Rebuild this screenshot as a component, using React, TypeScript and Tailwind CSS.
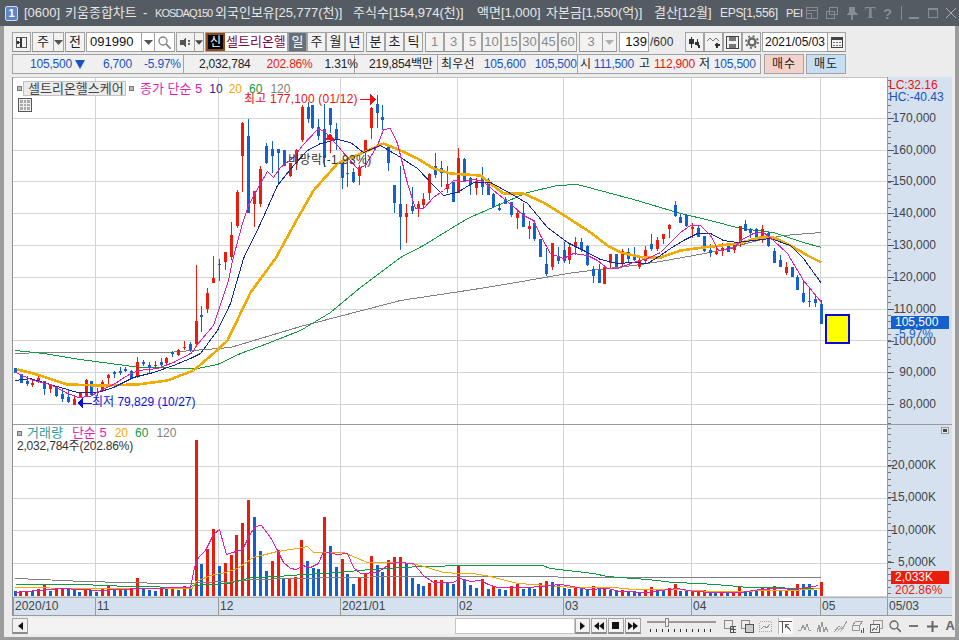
import React from 'react';

const RED = '#ea1c0c';
const BLUE = '#1460ce';
const GRID = '#d4d4d4';

// x, high, body top, body bottom, low, colour
type Candle = [number, number, number, number, number, 'r' | 'b'];
const CANDLES: Candle[] = [
  [15,368,368,373,373,'b'],[21,374,374,383,383,'b'],[27,376,381,384,386,'b'],[32,379,383,385,387,'r'],
  [38,374,378,382,383,'r'],[44,381,381,389,395,'b'],[50,384,384,389,393,'r'],[56,386,386,396,397,'b'],
  [62,389,394,399,402,'b'],[68,390,397,402,403,'b'],[74,395,399,405,405,'r'],[80,392,392,398,398,'r'],
  [86,379,380,397,397,'r'],[91,381,381,395,396,'b'],[97,388,392,393,396,'b'],[102,380,382,391,392,'r'],
  [108,374,375,378,384,'r'],[114,371,372,374,378,'b'],[120,367,371,373,375,'b'],[125,367,369,371,372,'b'],
  [131,370,371,378,378,'b'],[137,357,362,377,378,'r'],[143,360,362,364,366,'b'],[149,362,365,368,373,'b'],
  [155,361,365,366,368,'r'],[161,358,362,365,366,'b'],[166,357,358,363,365,'r'],[172,351,352,354,357,'b'],
  [178,349,350,355,356,'r'],[184,341,347,347,350,'r'],[190,342,344,350,352,'b'],[196,265,321,344,347,'r'],
  [201,306,315,317,332,'b'],[207,288,293,309,313,'r'],[213,256,278,283,283,'r'],[219,259,264,265,281,'b'],
  [225,252,252,262,270,'r'],[231,222,235,257,260,'r'],[237,190,192,226,228,'r'],[242,122,123,156,192,'r'],
  [248,119,136,213,213,'b'],[254,192,191,204,227,'r'],[260,166,169,204,207,'r'],[266,143,146,163,164,'b'],
  [272,141,149,156,173,'b'],[278,149,149,153,185,'b'],[284,150,150,166,166,'b'],[290,163,163,176,177,'r'],
  [296,149,150,163,170,'r'],[302,105,107,140,142,'r'],[308,102,107,119,123,'b'],[312,105,105,128,129,'b'],
  [318,119,127,136,140,'b'],[324,104,129,158,167,'b'],[330,108,108,125,133,'b'],[336,123,129,140,150,'b'],
  [342,160,160,178,189,'b'],[347,162,173,174,187,'b'],[353,168,172,182,183,'b'],[359,165,167,176,185,'r'],
  [365,140,140,153,168,'r'],[371,107,108,128,139,'r'],[377,95,104,113,128,'b'],[382,105,117,120,130,'b'],
  [388,147,147,163,171,'b'],[394,185,185,203,213,'b'],[400,166,204,217,250,'b'],[406,204,213,217,243,'r'],
  [412,187,206,211,214,'b'],[418,201,204,208,217,'r'],[423,193,199,205,208,'r'],[429,173,174,193,200,'r'],
  [435,153,166,175,178,'b'],[441,161,168,173,187,'b'],[447,166,184,189,193,'r'],[453,182,182,202,202,'b'],
  [458,148,158,193,193,'r'],[464,158,159,181,182,'b'],[470,177,178,185,195,'b'],[476,178,181,188,195,'r'],
  [482,167,178,187,195,'b'],[488,178,180,195,195,'b'],[493,193,194,207,208,'b'],[499,203,208,210,211,'b'],
  [505,197,199,204,204,'b'],[511,202,202,215,217,'b'],[517,209,213,218,229,'r'],[523,203,213,227,227,'b'],
  [529,221,226,229,239,'r'],[534,220,223,239,241,'b'],[540,239,239,257,257,'b'],[546,248,264,274,276,'b'],
  [552,243,243,267,270,'r'],[558,247,256,261,264,'b'],[564,242,250,261,263,'b'],[569,243,247,260,264,'r'],
  [575,237,242,246,255,'r'],[581,238,242,249,252,'b'],[587,245,246,265,266,'b'],[593,266,269,276,283,'b'],
  [599,264,270,283,283,'b'],[604,266,267,284,284,'r'],[610,254,254,263,268,'r'],[616,254,254,267,267,'b'],
  [622,249,251,263,267,'r'],[628,248,252,259,263,'b'],[634,247,255,260,261,'b'],[639,257,260,267,269,'r'],
  [645,246,250,261,263,'r'],[651,234,244,249,251,'b'],[657,237,240,249,251,'r'],[663,234,234,239,244,'r'],
  [669,224,225,229,238,'r'],[675,201,205,216,217,'b'],[680,214,217,223,223,'b'],[686,214,215,226,227,'b'],
  [692,223,227,229,238,'r'],[698,225,228,237,237,'b'],[704,236,236,251,252,'b'],[710,244,250,253,257,'b'],
  [716,245,252,254,255,'r'],[722,243,248,251,256,'r'],[728,244,245,252,252,'b'],[734,245,245,250,253,'r'],
  [740,226,226,243,247,'r'],[745,220,224,231,231,'b'],[750,228,229,233,238,'b'],[756,228,229,238,239,'b'],
  [762,225,229,238,243,'r'],[768,232,233,246,247,'b'],[774,248,251,263,263,'b'],[780,255,260,267,267,'b'],
  [786,262,267,273,275,'r'],[792,267,267,277,277,'b'],[797,275,277,290,290,'b'],[803,281,293,302,303,'b'],
  [809,289,301,302,307,'b'],[815,296,299,303,307,'b'],[821,300,304,324,324,'b'],
];

const VOLUME: [number, number, 'r' | 'b'][] = [
  [15,591,'b'],[20,591,'r'],[26,591,'r'],[32,591,'b'],[38,589,'r'],[44,585,'r'],[50,591,'b'],[56,589,'r'],
  [62,588,'r'],[68,589,'b'],[74,589,'b'],[79,592,'b'],[85,588,'r'],[90,590,'b'],[96,592,'b'],[102,588,'r'],
  [108,586,'r'],[114,590,'b'],[120,588,'r'],[125,590,'b'],[131,589,'r'],[137,578,'r'],[143,589,'b'],[149,590,'b'],
  [155,591,'b'],[161,588,'r'],[166,589,'b'],[172,589,'r'],[178,590,'b'],[184,586,'r'],[190,589,'b'],
  [196,440,'r'],[201,564,'b'],[207,549,'r'],[213,529,'r'],[219,566,'b'],[225,563,'r'],[231,555,'r'],[236,535,'r'],
  [242,523,'r'],[248,500,'r'],[254,517,'b'],[260,551,'b'],[266,571,'b'],[272,561,'r'],[278,550,'r'],[283,579,'b'],
  [289,578,'r'],[295,577,'r'],[301,540,'r'],[307,561,'b'],[313,568,'b'],[318,569,'b'],[324,517,'r'],[330,546,'b'],
  [336,567,'b'],[342,559,'r'],[347,574,'b'],[353,584,'b'],[359,578,'r'],[365,574,'r'],[371,556,'r'],[377,565,'b'],
  [382,572,'b'],[388,560,'r'],[394,557,'r'],[400,557,'r'],[406,563,'b'],[412,578,'b'],[418,584,'b'],[423,586,'b'],
  [429,583,'r'],[435,580,'r'],[441,580,'r'],[447,583,'b'],[453,584,'b'],[458,566,'r'],[464,579,'b'],[470,585,'b'],
  [476,588,'b'],[482,579,'r'],[488,589,'b'],[493,586,'r'],[499,589,'b'],[505,590,'b'],[511,586,'r'],[517,584,'r'],
  [523,589,'b'],[529,587,'b'],[534,589,'b'],[540,583,'r'],[546,581,'r'],[552,582,'b'],[558,585,'b'],[564,588,'b'],
  [569,589,'b'],[575,588,'r'],[581,588,'b'],[587,589,'b'],[593,586,'r'],[599,589,'b'],[604,588,'r'],[610,590,'b'],
  [616,591,'b'],[622,590,'r'],[628,591,'b'],[634,591,'b'],[639,592,'b'],[645,589,'r'],[651,587,'r'],[657,590,'b'],
  [663,590,'b'],[669,588,'r'],[675,584,'r'],[680,591,'b'],[686,591,'b'],[692,591,'r'],[698,590,'r'],[704,590,'r'],
  [710,592,'b'],[715,592,'b'],[721,592,'r'],[727,592,'b'],[733,592,'r'],[739,587,'r'],[745,591,'b'],[750,591,'b'],
  [756,591,'b'],[762,588,'r'],[768,588,'r'],[774,586,'r'],[780,591,'b'],[786,591,'r'],[792,589,'r'],[797,584,'r'],
  [803,584,'b'],[809,584,'b'],[815,590,'b'],[821,582,'r'],
];

const MA5 = '15,372 33,380 50,384 67,393 78,397 90,396 100,390 113,384 127,375 138,370 157,368 173,362 192,352 196,345 213,325 228,280 232,260 242,223 248,205 260,183 267,171 273,177 280,167 293,157 302,145 317,129 323,130 337,145 347,157 357,168 365,165 377,145 383,129 390,128 397,143 407,183 415,208 423,208 433,197 443,190 453,180 463,181 473,179 483,181 493,190 503,198 512,205 523,215 533,220 540,235 550,253 563,258 573,253 587,255 597,260 607,268 617,268 633,262 647,258 660,252 670,242 680,232 690,225 700,225 710,235 718,250 733,248 740,240 753,233 763,232 773,240 787,253 803,280 821,302';
const MA10 = '15,380 30,378 43,382 60,387 77,392 97,392 113,387 133,377 153,372 173,365 190,358 200,353 217,330 230,303 243,258 260,223 277,185 293,165 307,150 320,143 337,139 350,142 363,152 380,145 397,155 417,168 433,185 443,195 457,192 473,182 490,182 510,193 527,203 547,227 567,242 583,250 600,259 617,263 633,262 647,263 660,255 670,248 683,240 697,233 710,233 723,240 737,242 753,240 770,238 790,245 803,258 821,283';
const MA20 = '17,369 33,373 67,384 100,385 137,384 167,380 193,370 213,353 227,340 250,292 275,258 297,218 313,190 337,163 363,152 383,143 400,150 417,158 433,168 450,173 480,175 490,183 503,193 523,193 543,202 567,217 590,232 607,245 620,252 643,257 660,257 680,250 703,247 737,243 760,237 773,237 790,245 807,255 821,262';
const MA60 = '15,350 43,353 80,359 110,363 140,367 197,368 217,364 240,353 267,343 300,330 330,312 360,287 400,257 423,245 467,218 490,208 527,192 557,185 577,184 607,192 633,199 660,207 680,213 710,220 740,228 773,232 803,242 821,247';
const MA120 = '15,353 43,352 167,352 230,347 260,338 300,326 350,313 400,300 473,289 510,283 567,273 607,268 633,265 660,261 693,255 720,250 757,240 783,235 821,232';

const VMA5 = '15,592 60,588 100,590 140,588 190,587 194,567 198,557 205,550 213,534 219,529 226,554 242,549 250,533 255,526 261,525 270,537 277,550 283,562 290,568 296,569 302,565 310,567 318,563 323,551 337,554 347,553 353,567 360,573 377,572 390,563 397,562 413,563 423,575 433,582 453,582 460,578 470,581 480,580 488,584 497,587 510,587 527,587 540,586 560,584 567,585 587,589 607,588 620,591 647,592 660,590 677,588 693,591 713,592 740,592 760,589 780,588 793,589 807,587 818,585';
const VMA20 = '15,587 83,588 192,588 195,581 198,580 210,575 225,572 237,568 253,557 277,551 297,548 307,546 313,552 320,552 343,552 367,562 403,562 420,565 443,572 460,573 473,573 490,576 517,583 533,584 573,587 613,587 633,589 673,589 713,591 793,590 820,588';
const VMA60 = '15,584 80,584 128,586 190,587 192,585 227,583 252,577 277,576 303,574 337,572 370,569 403,567 420,566 470,565 542,565 550,568 567,570 593,573 607,576 620,577 647,579 673,582 700,583 727,585 747,587 820,588';
const VMA120 = '15,578 40,579 83,581 167,583 190,583 220,581 227,582 250,579 297,578 337,577 403,576 470,576 642,577 820,577';

const PRICE_GRID = [118, 150, 181, 213, 245, 277, 309, 340, 372, 404];
const VOLUME_GRID = [466, 498, 530, 563];
const MONTH_LINES = [95, 218, 340, 457, 563, 691, 820];
const PRICE_LABELS: [number, string][] = [[117,'170,000'],[149,'160,000'],[180,'150,000'],[212,'140,000'],[244,'130,000'],[276,'120,000'],[308,'110,000'],[340,'100,000'],[371,'90,000'],[403,'80,000']];
const VOLUME_LABELS: [number, string][] = [[464,'20,000K'],[496,'15,000K'],[529,'10,000K'],[561,'5,000K']];
const DATE_CELLS: [string, string][] = [
  ['2020/10','w-[82px]'],['11','w-[123px]'],['12','w-[122px]'],['2021/01','w-[117px]'],['02','w-[106px]'],
  ['03','w-[128px]'],['04','w-[129px]'],['05','w-[67px]'],['05/03','w-[65px]'],
];
const MINUTES = ['1', '3', '5', '10', '15', '30', '45', '60'];

const Btn = ({ children, className = '' }: { children?: React.ReactNode; className?: string }) => (
  <div className={`h-[20px] flex items-center justify-center bg-[#f2f2f2] border border-[#a3a3a3] border-b-[#8b8b8b] text-[13px] text-[#222] shrink-0 ${className}`}>
    {children}
  </div>
);

const Caret = ({ color = '#555' }: { color?: string }) => (
  <svg width="9" height="5" viewBox="0 0 9 5"><path d="M0 0h9L4.5 5z" fill={color} /></svg>
);

const Ico = ({ w = 13, h = 13, children }: { w?: number; h?: number; children: React.ReactNode }) => (
  <svg width={w} height={h} viewBox={`0 0 ${w} ${h}`} fill="none" shapeRendering="crispEdges" className="shrink-0">{children}</svg>
);

function PricePane() {
  return (
    <svg viewBox="13 77 874 347" width="874" height="347" shapeRendering="crispEdges" className="block text-[12px]">
      <rect x="13" y="77" width="874" height="1" fill="#c4c4c4" />
      {PRICE_GRID.map(y => <rect key={y} x="13" y={y} width="874" height="1" fill={GRID} />)}
      {MONTH_LINES.map(x => <rect key={x} x={x} y="78" width="1" height="346" fill={GRID} />)}
      <g transform="translate(0.5 0.5)" fill="none">
        <polyline points={MA120} stroke="#808080" strokeWidth="1" />
        <polyline points={MA60} stroke="#0f9b3f" strokeWidth="1" />
      </g>
      {CANDLES.map(([x, hi, top, bot, lo, c], i) => (
        <g key={i} fill={c === 'r' ? RED : BLUE}>
          <rect x={x} y={hi} width="1" height={lo - hi} />
          <rect x={x - 1} y={top} width="3" height={Math.max(bot - top, 1)} />
        </g>
      ))}
      <g transform="translate(0.5 0.5)" fill="none">
        <polyline points={MA20} stroke="#f0aa00" strokeWidth="2.6" />
        <polyline points={MA10} stroke="#14289e" strokeWidth="1" />
        <polyline points={MA5} stroke="#e01fb2" strokeWidth="1" />
      </g>
      <path d="M325 140h10l-5-7z" fill="#f01020" />
      <rect x="330" y="140" width="1" height="13" fill="#f01020" />
      <text x="288" y="164" fill="#333" letterSpacing="0.4">비망락(-1.93%)</text>
      <text x="244" y="103" fill="#f01010" letterSpacing="0.2">최고 177,100 (01/12)</text>
      <rect x="360" y="99" width="10" height="1" fill="#f01010" />
      <path d="M370 94l6 5.5-6 5.5z" fill="#f01010" />
      <path d="M83 397l-6 6 6 6z" fill="#0b10e0" />
      <rect x="83" y="403" width="9" height="1" fill="#0b10e0" />
      <text x="92" y="406" fill="#0b10e0">최저 79,829 (10/27)</text>
      <rect x="826" y="315" width="23" height="28" fill="#ffff00" stroke="#0a0ad8" strokeWidth="2" />
    </svg>
  );
}

function VolumePane() {
  return (
    <svg viewBox="13 425 874 172" width="874" height="172" shapeRendering="crispEdges" className="block">
      {VOLUME_GRID.map(y => <rect key={y} x="13" y={y} width="874" height="1" fill={GRID} />)}
      <rect x="13" y="596" width="874" height="1" fill={GRID} />
      {MONTH_LINES.map(x => <rect key={x} x={x} y="425" width="1" height="172" fill={GRID} />)}
      {VOLUME.map(([x, top, c]) => <rect key={x} x={x - 1} y={top} width="3" height={596 - top} fill={c === 'r' ? RED : BLUE} />)}
      <g transform="translate(0.5 0.5)" fill="none" strokeWidth="1">
        <polyline points={VMA120} stroke="#808080" />
        <polyline points={VMA60} stroke="#0f9b3f" />
        <polyline points={VMA20} stroke="#f0aa00" />
        <polyline points={VMA5} stroke="#e01fb2" />
      </g>
    </svg>
  );
}

function AxisTicks({ from, to, labels }: { from: number; to: number; labels: [number, string][] }) {
  const ticks: number[] = [];
  for (let y = from + 3; y < to; y += 6.35) ticks.push(Math.round(y));
  return (
    <svg viewBox={`887 ${from} 65 ${to - from}`} width="65" height={to - from} shapeRendering="crispEdges" className="block text-[12px]">
      {ticks.map(y => <rect key={y} x="887" y={y} width="3" height="1" fill="#777" />)}
      {labels.map(([y, t]) => (
        <g key={t}>
          <rect x="887" y={y + 1} width="6" height="1" fill="#555" />
          <text x="935" y={y + 5} textAnchor="end" fill="#444">{t}</text>
        </g>
      ))}
    </svg>
  );
}

export default function App() {
  return (
    <div className="w-[959px] h-[640px] overflow-hidden flex flex-col bg-[#ececec] text-[13px] [font-family:'Liberation_Sans','Noto_Sans_CJK_KR',sans-serif]">
      {/* title bar */}
      <div className="h-[26px] shrink-0 bg-[#555b63] flex items-center text-[#e6e6e6] pl-[5px] whitespace-nowrap">
        <div className="w-[13px] h-[15px] rounded-[2px] bg-[#5d86c6] border border-[#cfdcf0] text-white text-[11px] font-bold flex items-center justify-center shrink-0">1</div>
        <span className="ml-[6px] w-[34px] shrink-0">[0600]</span>
        <span className="ml-[7px] w-[72px] shrink-0">키움종합차트</span>
        <span className="ml-[6px] w-[7px] shrink-0">-</span>
        <span className="ml-[5px] w-[55px] shrink-0 text-[11px] tracking-[-0.9px]">KOSDAQ150</span>
        <span className="ml-[5px] w-[128px] shrink-0">외국인보유[25,777(천)]</span>
        <span className="ml-[10px] w-[112px] shrink-0">주식수[154,974(천)]</span>
        <span className="ml-[12px] w-[60px] shrink-0">액면[1,000]</span>
        <span className="ml-[9px] w-[99px] shrink-0">자본금[1,550(억)]</span>
        <span className="ml-[9px] w-[57px] shrink-0">결산[12월]</span>
        <span className="ml-[9px] w-[57px] shrink-0 text-[12px] tracking-[-0.3px]">EPS[1,556]</span>
        <span className="ml-[9px] w-[13px] shrink-0 text-[11px] tracking-[-0.3px]">PEI</span>
        <div className="flex items-center ml-[7px] text-[#868c94]">
          <Ico w={12} h={12}><path d="M.5.5h11v11H.5zM.5 3.5h11M.5 6.5h5v5" stroke="currentColor" /></Ico>
          <Ico w={8} h={12}><g /></Ico>
          <Ico w={12} h={12}><path d="M3.5.5h8v7h-8zM.5 4.5h8v7h-8z" stroke="currentColor" /></Ico>
          <Ico w={8} h={12}><g /></Ico>
          <Ico w={12} h={13}><path d="M3 0h6v5l3 3H7v5H5V8H0l3-3z" fill="currentColor" /></Ico>
          <span className="ml-[7px] w-[11px] text-[16px] font-bold leading-none [font-family:'Liberation_Serif',serif]">T</span>
          <span className="ml-[7px] w-[8px] text-[15px] font-bold leading-none">?</span>
          <div className="ml-[10px] w-px h-[14px] bg-[#868c94]" />
          <div className="ml-[7px] mt-[9px] w-[10px] h-[2px] bg-[#868c94]" />
          <div className="ml-[9px] w-[10px] h-[10px] border border-[#868c94] border-t-2" />
          <svg width="10" height="10" viewBox="0 0 10 10" className="ml-[8px]"><path d="M0 0l10 10M10 0L0 10" stroke="#a8adb3" /></svg>
        </div>
      </div>

      <div className="flex-1 min-h-0 flex flex-col border-l-[4px] border-r-[4px] border-b-[3px] border-[#9c9c9c] pl-[8px]">
        {/* toolbar */}
        <div className="h-[20px] mt-[6px] flex items-center">
          <Btn className="w-[19px]">
            <Ico><path d="M1.5 1.5h10v10h-10z" stroke="#555" /><path d="M5 2h2v9H5z" fill="#333" /><path d="M5 6.5L2 4.5v4z" fill="#333" /></Ico>
          </Btn>
          <Btn className="ml-px w-[22px]">주</Btn>
          <Btn className="w-[10px] !border-l-0"><Caret /></Btn>
          <Btn className="ml-px w-[20px]">전</Btn>
          <div className="ml-px w-[56px] h-[20px] bg-white border border-[#a3a3a3] flex items-center pl-[3px] text-[13px] text-[#111]">091990</div>
          <Btn className="w-[13px] !border-l-0 !bg-white"><Caret /></Btn>
          <Btn className="w-[20px] !border-l-0 !bg-white">
            <svg width="13" height="13" viewBox="0 0 13 13" fill="none"><circle cx="5" cy="5" r="4" stroke="#888" strokeWidth="1.4" /><path d="M8 8l5 5" stroke="#888" strokeWidth="1.8" /></svg>
          </Btn>
          <Btn className="ml-px w-[19px]">
            <Ico w={12}><path d="M0 4h3l3-3v11L3 9H0z" fill="#555" /><path d="M8 4h2v2H8zM8 7h2v2H8z" fill="#666" /></Ico>
          </Btn>
          <Btn className="w-[9px] !border-l-0"><Caret color="#444" /></Btn>
          <div className="ml-px w-[83px] h-[20px] flex border border-[#a3a3a3] bg-white">
            <div className="w-[19px] bg-black border-[2px] border-[#8f4a1a] text-white flex items-center justify-center text-[12px]">신</div>
            <div className="flex-1 text-[#7d0b3f] text-[13px] leading-[18px] pl-px whitespace-nowrap overflow-hidden">셀트리온헬</div>
          </div>
          <Btn className="w-[19px] !bg-[#66707c] !text-white">일</Btn>
          <Btn className="w-[19px]">주</Btn>
          <Btn className="w-[19px]">월</Btn>
          <Btn className="w-[19px]">년</Btn>
          <Btn className="ml-[2px] w-[19px]">분</Btn>
          <Btn className="w-[19px]">초</Btn>
          <Btn className="w-[19px]">틱</Btn>
          <div className="ml-[2px] flex">
            {MINUTES.map(m => <Btn key={m} className="w-[19px] !text-[#8a8a8a] text-[12px]">{m}</Btn>)}
          </div>
          <Btn className="ml-[2px] w-[24px] !text-[#8a8a8a] text-[12px]">3</Btn>
          <Btn className="w-[14px] !border-l-0"><Caret color="#b0b0b0" /></Btn>
          <div className="ml-[2px] w-[30px] h-[20px] bg-white border border-[#a3a3a3] flex items-center justify-end pr-[1px] text-[13px] text-[#111]">139</div>
          <span className="ml-px w-[35px] text-[12px] text-[#333]">/600</span>
          <Btn className="w-[19px]">
            <Ico><path d="M3 1h1v11H3zM1 3h5v5H1zM9 3h1v7H9zM7 6h4v3H7z" fill="#333" /><path d="M10 9h2v3h-2z" fill="#333" /></Ico>
          </Btn>
          <Btn className="w-[19px]">
            <Ico><path d="M0 5l3-3 3 3 3-3 3 3" stroke="#777" /><path d="M8 9h5M10 7v5" stroke="#333" strokeWidth="2" /></Ico>
          </Btn>
          <Btn className="w-[19px]">
            <Ico><path d="M.5.5h12v12H.5z" stroke="#444" /><path d="M3 1h7v4H3zM3 8h7v4H3z" fill="#777" /></Ico>
          </Btn>
          <Btn className="w-[19px]">
            <svg width="14" height="14" viewBox="0 0 14 14"><circle cx="7" cy="7" r="3.5" fill="none" stroke="#666" strokeWidth="2.4" /><circle cx="7" cy="7" r="6" fill="none" stroke="#666" strokeWidth="1.8" strokeDasharray="2 2.7" /></svg>
          </Btn>
          <div className="ml-px w-[66px] h-[20px] bg-white border border-[#a3a3a3] flex items-center justify-center text-[12px] text-[#111] whitespace-nowrap">2021/05/03</div>
          <Btn className="w-[18px] !border-l-0">
            <Ico w={12} h={11}><path d="M.5.5h11v10H.5z" stroke="#444" /><path d="M0 0h12v3H0z" fill="#444" /><path d="M2 5h2v1H2zM5 5h2v1H5zM8 5h2v1H8zM2 8h2v1H2zM5 8h2v1H5zM8 8h2v1H8z" fill="#777" /></Ico>
          </Btn>
        </div>

        {/* quote row */}
        <div className="h-[20px] mt-[2px] flex items-center text-[12px]">
          <div className="w-[749px] h-[20px] flex border border-[#a3a3a3] bg-[#f0f0f0] whitespace-nowrap tracking-[-0.2px]">
            <div className="w-[171px] flex items-center text-[#1654c0] border-r border-[#a3a3a3]">
              <span className="ml-[17px]">105,500</span>
              <svg width="10" height="9" viewBox="0 0 10 9" className="ml-[3px]"><path d="M0 0h10L5 9z" fill="#1654c0" /></svg>
              <span className="ml-[18px]">6,700</span>
              <span className="ml-[12px]">-5.97%</span>
            </div>
            <div className="w-[171px] flex items-center text-[#222] border-r border-[#a3a3a3]">
              <span className="ml-[15px]">2,032,784</span>
              <span className="ml-[16px] text-[#e01c10]">202.86%</span>
              <span className="ml-[12px]">1.31%</span>
            </div>
            <div className="w-[83px] flex items-center text-[#222] border-r border-[#a3a3a3]">
              <span className="ml-[14px]">219,854백만</span>
            </div>
            <div className="w-[140px] flex items-center text-[#1654c0] border-r border-[#a3a3a3]">
              <span className="ml-[3px] text-[#222] tracking-[0.2px]">최우선</span>
              <span className="ml-[9px]">105,600</span>
              <span className="ml-[9px]">105,500</span>
            </div>
            <div className="flex-1 flex items-center text-[#1654c0]">
              <span className="ml-[2px] text-[#222]">시</span>
              <span className="ml-[3px]">111,500</span>
              <span className="ml-[5px] text-[#222]">고</span>
              <span className="ml-[4px] text-[#f01010]">112,900</span>
              <span className="ml-[4px] text-[#222]">저</span>
              <span className="ml-[4px]">105,500</span>
            </div>
          </div>
          <div className="ml-[3px] w-[40px] h-[20px] bg-[#f4d1ca] border border-[#a3a3a3] flex items-center justify-center text-[#222] tracking-[1px]">매수</div>
          <div className="ml-[2px] w-[40px] h-[20px] bg-[#c6def3] border border-[#a3a3a3] flex items-center justify-center text-[#222] tracking-[1px]">매도</div>
        </div>

        {/* chart */}
        <div className="mt-[3px] w-[940px] border-l border-[#8f8f8f] bg-white">
          <div className="flex relative">
            <PricePane />
            <div className="w-[65px] bg-[#d5e1ef] border-l border-[#9a9a9a] relative overflow-hidden">
              <AxisTicks from={77} to={424} labels={PRICE_LABELS} />
              <div className="absolute left-0 top-0 pl-px text-[12px] leading-[12px]">
                <div className="text-[#f01010] mt-[2px]">LC:32.16</div>
                <div className="text-[#1654c0]">HC:-40.43</div>
              </div>
              <div className="absolute left-[3px] top-[239px] w-[58px] h-[13px] bg-[#1460ce] text-white text-[12px] leading-[13px] pl-[4px]">105,500</div>
              <div className="absolute left-[3px] top-[252px] w-[58px] h-[8px] bg-[#d5e1ef] text-[#1460ce] text-[12px] leading-[10px] pl-[4px]">-5.97%</div>
            </div>
            {/* legend */}
            <div className="absolute left-[4px] top-[2px] flex items-center text-[12px] whitespace-nowrap">
              <div className="w-[5px] h-[5px] bg-[#bbb] border border-[#777]" />
              <div className="ml-[1px] w-[103px] h-[15px] bg-[#ececec] border border-[#c4c4c4] text-[#444] text-[13px] leading-[13px] pl-[4px]">셀트리온헬스케어</div>
              <div className="ml-[3px] w-[5px] h-[5px] bg-[#bbb] border border-[#777]" />
              <span className="ml-[6px] text-[#e01fb2] text-[13px]">종가 단순 5</span>
              <span className="ml-[7px] text-[#14289e]">10</span>
              <span className="ml-[6px] text-[#f0aa00]">20</span>
              <span className="ml-[7px] text-[#0f9b3f]">60</span>
              <span className="ml-[8px] text-[#808080]">120</span>
            </div>
            <div className="absolute left-[5px] top-[21px] w-[14px] h-[14px] border border-[#555] bg-[#eee] grid grid-cols-3 grid-rows-3 gap-px p-px">
              {Array.from({ length: 9 }, (_, i) => <div key={i} className="bg-[#aaa]" />)}
            </div>
          </div>
          <div className="flex relative border-t border-[#9a9a9a]">
            <VolumePane />
            <div className="w-[65px] bg-[#d5e1ef] border-l border-[#9a9a9a] relative overflow-hidden">
              <AxisTicks from={425} to={597} labels={VOLUME_LABELS} />
              <div className="absolute right-[3px] top-[2px] w-[8px] h-[7px] bg-[#e8e8e8] border border-[#999] flex items-center justify-center">
                <div className="w-[4px] h-[3px] bg-[#444]" />
              </div>
              <div className="absolute left-[3px] top-[146px] w-[58px] h-[13px] bg-[#ea1c0c] text-white text-[12px] leading-[13px] pl-[4px]">2,033K</div>
              <div className="absolute left-[3px] top-[159px] text-[#ea1c0c] text-[12px] leading-[13px] pl-[4px]">202.86%</div>
            </div>
            <div className="absolute left-[4px] top-px text-[12px] whitespace-nowrap">
              <div className="flex items-center h-[14px]">
                <div className="w-[5px] h-[5px] bg-[#bbb] border border-[#777]" />
                <span className="ml-[5px] text-[#2f9a9a] text-[13px]">거래량</span>
                <span className="ml-[9px] text-[#e01fb2] text-[13px]">단순 5</span>
                <span className="ml-[8px] text-[#f0aa00]">20</span>
                <span className="ml-[7px] text-[#0f9b3f]">60</span>
                <span className="ml-[8px] text-[#808080]">120</span>
              </div>
              <div className="text-[#333] leading-[13px] tracking-[-0.2px]">2,032,784주(202.86%)</div>
            </div>
          </div>
          <div className="h-[19px] flex bg-[#d5e1ef] border-b border-[#9a9a9a] border-t border-t-[#b0b0b0] text-[12px] text-[#444]">
            {DATE_CELLS.map(([t, w]) => (
              <div key={t} className={`${w} border-l border-[#9a9a9a] pl-[1px] leading-[17px] shrink-0`}>{t}</div>
            ))}
          </div>
        </div>

        {/* bottom scroll bar */}
        <div className="mt-[2px] h-[16px] flex items-center">
          <Btn className="w-[16px] !h-[16px] border-b-2">
            <svg width="5" height="8" viewBox="0 0 5 8"><path d="M5 0v8L0 4z" fill="#111" /></svg>
          </Btn>
          <div className="w-[556px] h-[16px] flex">
            <div className="w-[427px] bg-[#f3f3f3]" />
            <div className="flex-1 bg-white border border-[#c4c4c4]" />
          </div>
          <Btn className="w-[15px] !h-[16px] border-b-2"><svg width="5" height="8" viewBox="0 0 5 8"><path d="M0 0v8l5-4z" fill="#111" /></svg></Btn>
          <Btn className="ml-px w-[16px] !h-[16px] border-b-2"><svg width="10" height="8" viewBox="0 0 10 8"><path d="M5 0v8L0 4zM10 0v8L5 4z" fill="#111" /></svg></Btn>
          <Btn className="ml-px w-[16px] !h-[16px] border-b-2"><div className="w-[7px] h-[7px] bg-[#111]" /></Btn>
          <Btn className="ml-px w-[16px] !h-[16px] border-b-2"><svg width="10" height="8" viewBox="0 0 10 8"><path d="M0 0v8l5-4zM5 0v8l5-4z" fill="#111" /></svg></Btn>
          <svg width="70" height="16" viewBox="0 0 70 16" shapeRendering="crispEdges" className="ml-[6px] shrink-0">
            <rect x="0" y="3" width="69" height="2" fill="#999" />
            <rect x="18" y="0" width="3" height="8" fill="#eee" stroke="#888" />
            {[3, 9, 15, 21, 27, 33, 39, 45, 51, 57, 63].map(x => <rect key={x} x={x} y="11" width="1" height="3" fill="#333" />)}
          </svg>
          <div className="ml-[7px] flex items-center text-[#8a8a8a] gap-[5px]">
            <Ico w={12}><path d="M.5.5h8v8h-8z" stroke="#888" /><path d="M6.5 6.5h6v6h-6zM9.5 6v6M6 9.5h6" stroke="#555" /></Ico>
            <Ico w={13}><path d="M.5.5h8v8h-8z" stroke="#888" /><path d="M4.5 4.5h8v8h-8z" stroke="#555" fill="#ccc" /></Ico>
            <Ico w={13}><path d="M.5 1.5h12v10H.5z" stroke="#aaa" strokeDasharray="1 1" /><path d="M2 9l3-3 3 2 3-4" stroke="#999" /></Ico>
            <div className="ml-px w-[15px] h-[16px] bg-[#f8f8f8] border-l border-[#bbb] flex items-center justify-center">
              <Ico><path d="M0 1.5h13M3.5 1v12" stroke="#555" /><path d="M6 4l6 7M6 4v4M6 4h4" stroke="#666" /></Ico>
            </div>
            <Ico><path d="M0 10h3l2-5 2 5 2-6 2 6h2" stroke="#999" /></Ico>
            <Ico><path d="M1 12l2-7 1 7 2-10 2 10 2-5 2 5" stroke="#999" /></Ico>
            <Ico><path d="M0 12l5-6 3 3 5-8" stroke="#999" /><path d="M3 12l5-6M6 12l5-6" stroke="#bbb" /></Ico>
            <Ico><path d="M.5 5.5l3-4h7l-3 4zM.5 5.5v5h7v-5" stroke="#999" /><path d="M9 10h1v3H9zM11 8h1v5h-1z" fill="#555" /></Ico>
            <Ico><path d="M3.5.5h9v8h-9z" stroke="#999" /><path d="M.5 4.5h9v8h-9z" stroke="#666" fill="#eee" /><path d="M2 11l2-3 2 2 2-4" stroke="#777" /></Ico>
            <svg width="12" height="13" viewBox="0 0 12 13" fill="none" className="ml-[1px]"><circle cx="5" cy="5" r="4" stroke="#666" strokeWidth="1.3" /><path d="M8 8l4 4" stroke="#666" strokeWidth="1.6" /></svg>
            <div className="ml-[3px] w-[9px] h-[2px] bg-[#777]" />
            <svg width="11" height="11" viewBox="0 0 11 11" className="ml-[4px]"><path d="M0 4.5h11v2H0zM4.5 0h2v11h-2z" fill="#666" /></svg>
            <span className="ml-[3px] text-[13px] font-bold text-[#666]">A</span>
          </div>
        </div>
      </div>
    </div>
  );
}
